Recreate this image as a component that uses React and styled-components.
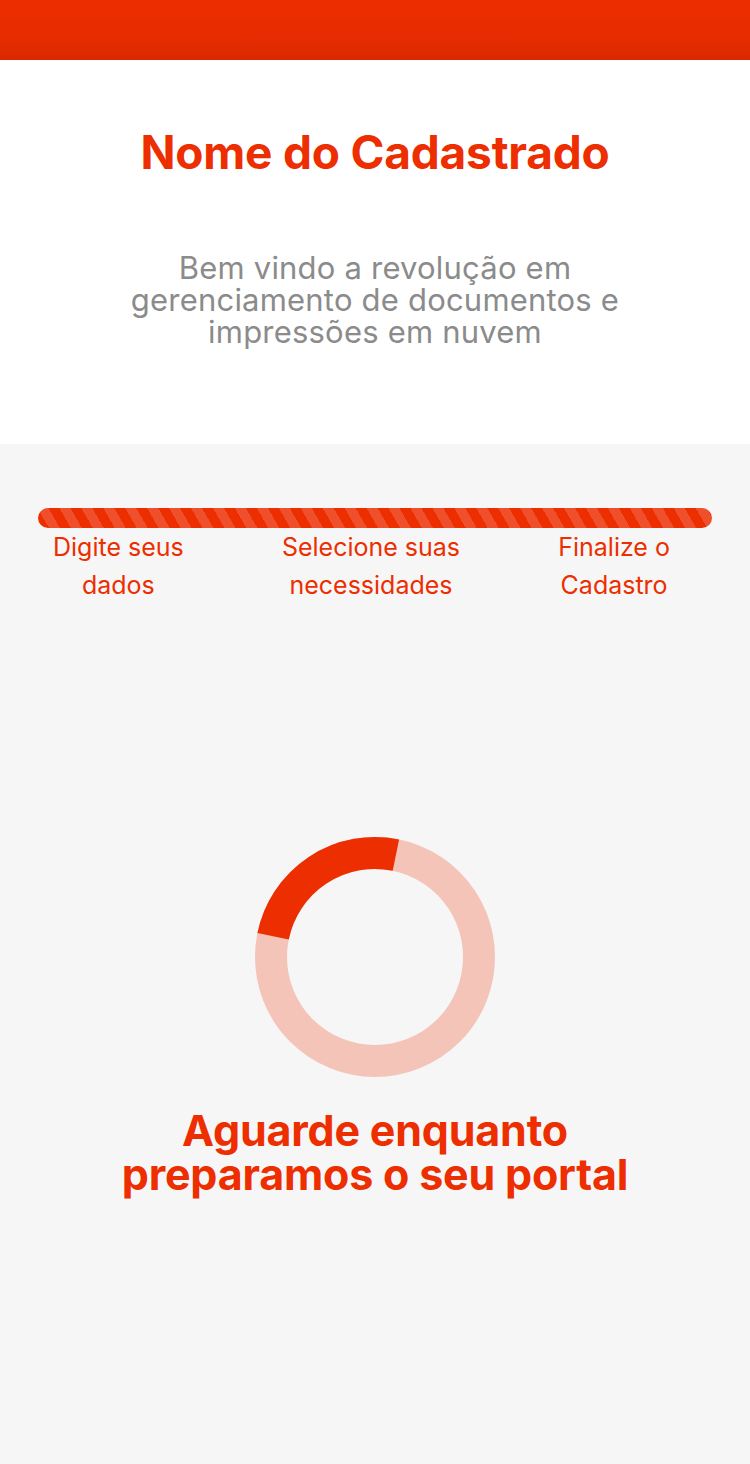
import styled, { createGlobalStyle } from 'styled-components'

const GlobalStyle = createGlobalStyle`
	html, body { margin: 0; padding: 0; }
	body { background: #f6f6f6; font-family: Inter, "Noto Sans", sans-serif; }
`

const red = '#ec2e00'

const TopBar = styled.header`
	height: 60px;
	background: linear-gradient(to bottom, #ee2e00 0%, #e52b00 70%, #d92800 100%);
`

const Welcome = styled.section`
	background: #fff;
	height: 384px;
	display: flex;
	flex-direction: column;
	align-items: center;
	text-align: center;
	padding-top: 65px;
	box-sizing: border-box;
`

const Title = styled.h1`
	margin: 0;
	font-size: 46px;
	line-height: 54px;
	font-weight: 700;
	color: ${red};
	letter-spacing: -0.2px;
`

const Subtitle = styled.p`
	margin: 73px 0 0;
	width: 540px;
	font-size: 31px;
	line-height: 32px;
	font-weight: 400;
	color: #8b8b8b;
	letter-spacing: 0.2px;
`

const Steps = styled.section`
	padding-top: 64px;
	min-height: 1020px;
	box-sizing: border-box;
`

const Progress = styled.div`
	margin: 0 38px;
	height: 20px;
	border-radius: 10px;
	background: repeating-linear-gradient(
		60deg,
		${red} 0 9.5px,
		#f04f2c 9.5px 19px
	);
`

const Labels = styled.div`
	display: flex;
	justify-content: space-between;
	padding: 0 80px 0 53px;
`

const Label = styled.div`
	text-align: center;
	font-size: 25px;
	line-height: 38px;
	color: ${red};
`

const Loader = styled.div`
	display: flex;
	justify-content: center;
	margin-top: 232px;
`

const Message = styled.h2`
	margin: 30px 0 0;
	text-align: center;
	font-size: 43px;
	line-height: 44px;
	font-weight: 700;
	color: ${red};
	letter-spacing: -0.2px;
`

const Ring = () => {
	const r = 104
	const c = 2 * Math.PI * r
	const arc = c * (90 / 360)
	return (
		<svg width="242" height="242" viewBox="0 0 242 242">
			<circle cx="121" cy="121" r={r} fill="none" stroke="#f4c4b8" strokeWidth="32" />
			<circle
				cx="121"
				cy="121"
				r={r}
				fill="none"
				stroke={red}
				strokeWidth="32"
				strokeDasharray={`${arc} ${c}`}
				transform="rotate(191.5 121 121)"
			/>
		</svg>
	)
}

const App = () => {
	const steps = [
		[ 'Digite seus', 'dados' ],
		[ 'Selecione suas', 'necessidades' ],
		[ 'Finalize o', 'Cadastro' ],
	]
	return (
		<>
			<GlobalStyle />
			<TopBar />
			<Welcome>
				<Title>Nome do Cadastrado</Title>
				<Subtitle>Bem vindo a revolução em gerenciamento de documentos e impressões em nuvem</Subtitle>
			</Welcome>
			<Steps>
				<Progress />
				<Labels>
					{steps.map(([ a, b ]) => (
						<Label key={a}>
							{a}
							<br />
							{b}
						</Label>
					))}
				</Labels>
				<Loader>
					<Ring />
				</Loader>
				<Message>
					Aguarde enquanto
					<br />
					preparamos o seu portal
				</Message>
			</Steps>
		</>
	)
}

export default App
